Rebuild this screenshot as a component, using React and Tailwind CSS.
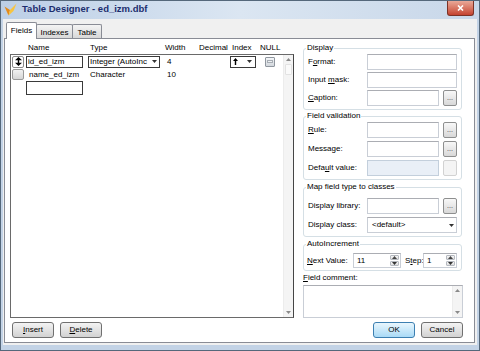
// Table Designer dialog
import React from "react";

// access-key underline
function U({ children }) {
    return <span className="underline">{children}</span>;
}

function DownTri() {
    return (
        <svg width="5" height="3" viewBox="0 0 5 3">
            <path d="M0 0h5L2.5 3z" fill="#333" />
        </svg>
    );
}

function UpTri({ color = "#8a8a8a" }) {
    return (
        <svg width="5" height="3" viewBox="0 0 5 3">
            <path d="M0 3h5L2.5 0z" fill={color} />
        </svg>
    );
}

// Small "..." button next to text boxes
function Dots({ disabled }) {
    if (disabled) {
        return <div className="w-[14px] h-[16px] ml-[4px] rounded-[2px] border border-[#d2d2d2] bg-[#f4f4f4]"></div>;
    }
    return (
        <div className="w-[14px] h-[16px] ml-[4px] rounded-[2px] border border-[#8e8f8f] bg-linear-to-b from-[#f8f8f8] to-[#d8d8d8] flex items-end justify-center pb-[4px] text-[7px] leading-none text-[#333]">
            ...
        </div>
    );
}

function TextBox({ w, disabled, children }) {
    return (
        <div className={`${w} h-[16px] border ${disabled ? "border-[#c3cfdc] bg-[#e9eff7]" : "border-[#c9ced6] border-t-[#abadb3] bg-white"} flex items-center pl-[4px]`}>
            {children}
        </div>
    );
}

function FieldRow({ label, children }) {
    return (
        <div className="flex items-center h-[16px] ml-[2px]">
            <div className="w-[59px] whitespace-nowrap">{label}</div>
            {children}
        </div>
    );
}

function Group({ title, className, children }) {
    return (
        <fieldset className={`w-[159px] border border-[#d5dfe5] rounded-[3px] pl-[2px] pr-[4px] ${className}`}>
            <legend className="px-[1px] leading-[12px]">{title}</legend>
            {children}
        </fieldset>
    );
}

// Numeric box with spin buttons
function Spin({ w, value }) {
    return (
        <div className={`${w} h-[15px] border border-[#c9ced6] border-t-[#abadb3] bg-white flex`}>
            <div className="flex-1 pl-[3px] flex items-center">{value}</div>
            <div className="w-[11px] flex flex-col p-px gap-px">
                <div className="flex-1 rounded-[1px] border border-[#b5b9c0] bg-linear-to-b from-[#f6f6f6] to-[#dedede] flex items-center justify-center">
                    <UpTri color="#444" />
                </div>
                <div className="flex-1 rounded-[1px] border border-[#b5b9c0] bg-linear-to-b from-[#f6f6f6] to-[#dedede] flex items-center justify-center">
                    <DownTri />
                </div>
            </div>
        </div>
    );
}

function Button({ def, className, children }) {
    return (
        <button
            type="button"
            className={`h-[16px] w-[42px] rounded-[3px] border ${def ? "border-[#3c7fb1] bg-linear-to-b from-[#e8f6fd] to-[#a9daf6]" : "border-[#707070] bg-linear-to-b from-[#f3f3f3] to-[#d2d2d2]"} flex items-center justify-center text-[8px] leading-none ${className}`}
        >
            {children}
        </button>
    );
}

// Vertical scrollbar used in grid and comment box
function ScrollBar({ thumb }) {
    return (
        <div className="w-[10px] bg-[#f4f4f4] border-l border-[#ececec] flex flex-col">
            <div className="h-[9px] flex items-center justify-center">
                <UpTri />
            </div>
            {thumb && <div className="h-[11px] mx-px rounded-[1px] border border-[#e2e2e2] bg-[#fafafa]"></div>}
            <div className="flex-1"></div>
            <div className="h-[9px] flex items-center justify-center">
                <svg width="5" height="3" viewBox="0 0 5 3">
                    <path d="M0 0h5L2.5 3z" fill="#8a8a8a" />
                </svg>
            </div>
        </div>
    );
}

export default function App() {
    return (
        <div className="w-[480px] h-[351px] flex flex-col border border-[#55687b] bg-[#c3d3e6] font-['Liberation_Sans',Arial,sans-serif] text-[8px] leading-[10px] text-black overflow-hidden">
            {/* Title bar */}
            <div className="h-[18px] flex items-start bg-linear-to-r from-[#bccfe6] via-[#dbe6f2] to-[#c8d7e9]">
                <div className="pl-[3px] pt-[2px]">
                    <svg width="13" height="13" viewBox="0 0 13 13">
                        <path d="M0.5 3.5 L6 7 L4.5 12.5 Z" fill="#e48a1a" />
                        <path d="M6 7 L12.5 0.5 L9.5 8 L4.5 12.5 Z" fill="#f7c440" />
                    </svg>
                </div>
                <div className="ml-[5px] pt-[3px] text-[9.5px] leading-[10px] font-bold text-[#1b2d6e]">
                    Table Designer - ed_izm.dbf
                </div>
                <div className="ml-auto mr-[5px] w-[27px] h-[15px] rounded-b-[3px] border border-t-0 border-[#7c3226] bg-linear-to-b from-[#e9a898] to-[#c4412f] flex items-center justify-center">
                    <svg width="7" height="6" viewBox="0 0 7 6">
                        <path d="M1 0.5 L6 5.5 M6 0.5 L1 5.5" stroke="#fff" strokeWidth="1.6" />
                    </svg>
                </div>
            </div>

            {/* Dialog body */}
            <div className="flex-1 mx-[2px] mb-[5px] bg-[#f0f0f0] pt-[3px] pb-[2px] flex flex-col">
                {/* Tabs */}
                <div className="h-[16px] flex items-end pl-[3px]">
                    <div className="relative z-10 h-[17px] -mb-px w-[31px] bg-white border border-b-0 border-[#898c95] rounded-t-[2px] text-center pt-[3px]">
                        Fields
                    </div>
                    <div className="h-[14px] w-[37px] -ml-px bg-linear-to-b from-[#f4f4f4] to-[#d8d8d8] border border-b-0 border-[#898c95] rounded-t-[2px] text-center pt-[3px]">
                        Indexes
                    </div>
                    <div className="h-[14px] w-[30px] -ml-px bg-linear-to-b from-[#f4f4f4] to-[#d8d8d8] border border-b-0 border-[#898c95] rounded-t-[2px] text-center pt-[3px]">
                        Table
                    </div>
                </div>

                {/* Tab page */}
                <div className="flex-1 ml-px mr-[2px] bg-white border border-[#898c95] pt-[3px] pl-[5px] pr-[11px] pb-[4px] flex flex-col">
                    <div className="h-[276px] flex">
                        {/* Fields grid */}
                        <div className="w-[284px] flex flex-col">
                            <div className="h-[12px] flex items-center">
                                <div className="ml-[18px] w-[62px]">Name</div>
                                <div className="w-[75px]">Type</div>
                                <div className="w-[34px]">Width</div>
                                <div className="w-[33px]">Decimal</div>
                                <div className="w-[28px]">Index</div>
                                <div>NULL</div>
                            </div>
                            <div className="flex-1 border border-[#6a6a6a] border-r-[#454545] bg-white flex">
                                <div className="flex-1 flex flex-col">
                                    {/* Row 1 (current) */}
                                    <div className="h-[13px] flex items-center">
                                        <div className="ml-px w-[12px] h-[12px] rounded-[2px] border border-[#8a8a8a] bg-white flex items-center justify-center">
                                            <svg width="7" height="9" viewBox="0 0 7 9">
                                                <path d="M3.5 0 L7 3.3 H0 Z M0 5.7 H7 L3.5 9 Z M2.8 3 H4.2 V6 H2.8 Z" fill="#000" />
                                            </svg>
                                        </div>
                                        <div className="ml-[2px] w-[57px] h-[12px] border border-[#3a3a3a] flex items-center pl-[1px] whitespace-nowrap">
                                            id_ed_izm
                                        </div>
                                        <div className="ml-[5px] w-[72px] h-[12px] border border-[#3a3a3a] flex items-center pl-px overflow-hidden whitespace-nowrap">
                                            <span className="flex-1 overflow-hidden">Integer (AutoInc</span>
                                            <span className="w-[9px] flex justify-center">
                                                <DownTri />
                                            </span>
                                        </div>
                                        <div className="ml-[7px] w-[63px]">4</div>
                                        <div className="w-[26px] h-[12px] border border-[#3a3a3a] flex items-center pl-[2px]">
                                            <svg width="5" height="7" viewBox="0 0 5 7">
                                                <path d="M2.5 0 L5 3 H3.2 V7 H1.8 V3 H0 Z" fill="#000" />
                                            </svg>
                                            <span className="ml-auto mr-[3px] flex">
                                                <DownTri />
                                            </span>
                                        </div>
                                        <div className="ml-[9px] w-[10px] h-[10px] rounded-[1px] border border-[#8f969e] bg-linear-to-b from-[#f4f6f8] to-[#d2d7dc] flex items-center justify-center">
                                            <div className="w-[6px] h-[3px] border border-[#a7adb4] bg-[#eef0f2]"></div>
                                        </div>
                                    </div>
                                    {/* Row 2 */}
                                    <div className="h-[13px] flex items-center">
                                        <div className="ml-px w-[12px] h-[11px] rounded-[2px] border border-[#9a9a9a] bg-linear-to-b from-[#f2f2f2] to-[#d6d6d6]"></div>
                                        <div className="ml-[2px] w-[57px] pl-[3px] whitespace-nowrap">name_ed_izm</div>
                                        <div className="ml-[5px] w-[72px] pl-[2px]">Character</div>
                                        <div className="ml-[7px] w-[63px]">10</div>
                                    </div>
                                    {/* New row */}
                                    <div className="h-[14px] flex items-center">
                                        <div className="ml-[15px] w-[57px] h-[14px] border border-[#3a3a3a] bg-white"></div>
                                    </div>
                                </div>
                                <ScrollBar thumb />
                            </div>
                        </div>

                        {/* Properties */}
                        <div className="ml-auto w-[160px] flex flex-col">
                            <Group title="Display" className="pb-[3px]">
                                <div className="flex flex-col gap-[2px]">
                                    <FieldRow label={<>F<U>o</U>rmat:</>}>
                                        <TextBox w="w-[90px]" />
                                    </FieldRow>
                                    <FieldRow label={<>Input <U>m</U>ask:</>}>
                                        <TextBox w="w-[90px]" />
                                    </FieldRow>
                                    <FieldRow label={<><U>C</U>aption:</>}>
                                        <TextBox w="w-[72px]" />
                                        <Dots />
                                    </FieldRow>
                                </div>
                            </Group>
                            <Group title="Field validation" className="pb-[3px]">
                                <div className="flex flex-col gap-[3px]">
                                    <FieldRow label={<><U>R</U>ule:</>}>
                                        <TextBox w="w-[72px]" />
                                        <Dots />
                                    </FieldRow>
                                    <FieldRow label="Message:">
                                        <TextBox w="w-[72px]" />
                                        <Dots />
                                    </FieldRow>
                                    <FieldRow label={<>Defa<U>u</U>lt value:</>}>
                                        <TextBox w="w-[72px]" disabled />
                                        <Dots disabled />
                                    </FieldRow>
                                </div>
                            </Group>
                            <Group title="Map field type to classes" className="mt-px pt-[5px] pb-[3px]">
                                <div className="flex flex-col gap-[3px]">
                                    <FieldRow label="Display library:">
                                        <TextBox w="w-[72px]" />
                                        <Dots />
                                    </FieldRow>
                                    <FieldRow label="Display class:">
                                        <TextBox w="w-[90px]">
                                            <span className="flex-1">&lt;default&gt;</span>
                                            <span className="w-[10px] flex justify-center">
                                                <DownTri />
                                            </span>
                                        </TextBox>
                                    </FieldRow>
                                </div>
                            </Group>
                            <Group title="AutoIncrement" className="mt-px pt-[3px] pb-[2px]">
                                <div className="flex items-center h-[15px] ml-px">
                                    <div className="w-[46px] whitespace-nowrap">
                                        <U>N</U>ext Value:
                                    </div>
                                    <Spin w="w-[48px]" value="11" />
                                    <div className="ml-[4px] w-[18px]">
                                        S<U>t</U>ep:
                                    </div>
                                    <Spin w="w-[34px]" value="1" />
                                </div>
                            </Group>
                            <div className="mt-[2px] h-[10px]">
                                <U>F</U>ield comment:
                            </div>
                            <div className="mt-[2px] h-[33px] border border-[#c9ced6] border-t-[#abadb3] bg-white flex justify-end">
                                <ScrollBar />
                            </div>
                        </div>
                    </div>

                    {/* Buttons */}
                    <div className="mt-[4px] h-[16px] flex items-center">
                        <Button className="ml-[2px] w-[41px]">
                            <U>I</U>nsert
                        </Button>
                        <Button className="ml-[6px] w-[41px]">
                            <U>D</U>elete
                        </Button>
                        <Button def className="ml-auto">
                            OK
                        </Button>
                        <Button className="ml-[6px]">Cancel</Button>
                    </div>
                </div>
            </div>
        </div>
    );
}
